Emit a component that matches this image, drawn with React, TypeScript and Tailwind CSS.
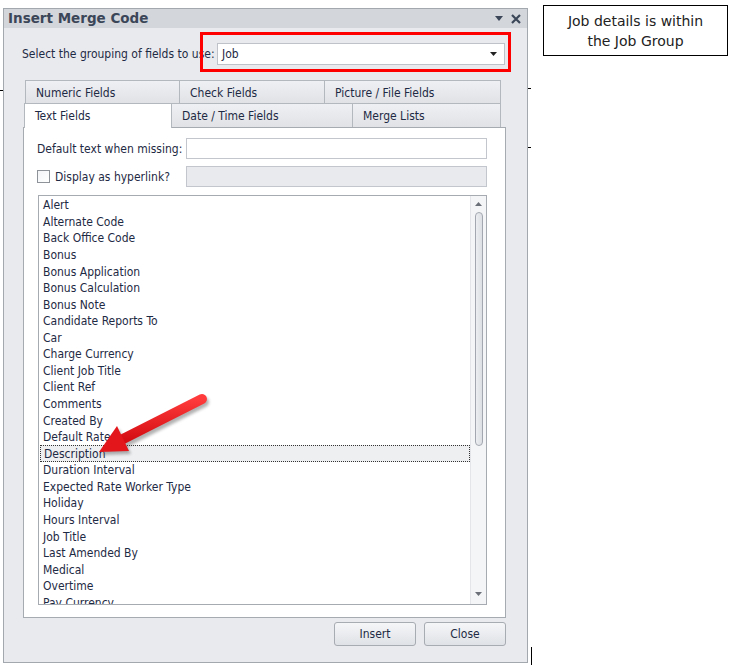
import React from 'react';

const items = [
  'Alert', 'Alternate Code', 'Back Office Code', 'Bonus', 'Bonus Application', 'Bonus Calculation',
  'Bonus Note', 'Candidate Reports To', 'Car', 'Charge Currency', 'Client Job Title', 'Client Ref',
  'Comments', 'Created By', 'Default Rate', 'Description', 'Duration Interval',
  'Expected Rate Worker Type', 'Holiday', 'Hours Interval', 'Job Title', 'Last Amended By',
  'Medical', 'Overtime', 'Pay Currency',
];

const tabCls =
  'flex items-center pl-[10px] pt-[1px] border-t border-r border-[#b3b7be] bg-gradient-to-b from-[#eef0f3] to-[#e0e2e6]';

function RedArrow() {
  return (
    <svg className="absolute left-[85px] top-[385px]" width="135" height="90" viewBox="85 385 135 90">
      <defs>
        <filter id="sh" x="-20%" y="-20%" width="140%" height="140%">
          <feGaussianBlur stdDeviation="1.5" />
        </filter>
        <linearGradient id="rg" x1="0" y1="0" x2="0" y2="1">
          <stop offset="0" stopColor="#ff3b3b" />
          <stop offset="1" stopColor="#d40d12" />
        </linearGradient>
      </defs>
      <g opacity="0.45" filter="url(#sh)" transform="translate(2 3)">
        <line x1="202" y1="399" x2="122" y2="440" stroke="#555" strokeWidth="10" strokeLinecap="round" />
        <polygon points="99,452 129,451 117,426" fill="#555" />
      </g>
      <line x1="202" y1="399" x2="121" y2="440" stroke="url(#rg)" strokeWidth="10" strokeLinecap="round" />
      <polygon points="99,452 129,451 117,426" fill="#e3161b" />
    </svg>
  );
}

export default function App() {
  return (
    <div className="relative w-[730px] h-[665px] bg-white overflow-hidden flex items-start font-['DejaVu_Sans_Condensed','Liberation_Sans',sans-serif] text-[12px] text-[#1e2a44]">
      {/* dialog */}
      <div className="ml-[3px] mt-[8px] w-[525px] h-[655px] border border-[#a3a7ae] bg-[#e9eaee] flex flex-col">
        <div className="h-[19px] bg-[#d3d6db] flex items-center pl-[4px] pr-[6px]">
          <span className="font-bold font-['DejaVu_Sans','Liberation_Sans',sans-serif] text-[13.5px] text-[#3b4658]">Insert Merge Code</span>
          <div className="ml-auto flex items-center gap-[8px] text-[#3b4658]">
            <svg width="8" height="5" viewBox="0 0 8 5"><polygon points="0,0 8,0 4,5" fill="#3b4658" /></svg>
            <svg width="10" height="10" viewBox="0 0 10 10">
              <path d="M1 1 L9 9 M9 1 L1 9" stroke="#3b4658" strokeWidth="2.2" />
            </svg>
          </div>
        </div>

        <div className="flex items-center mt-[15px] pl-[18px]">
          <span className="w-[195px] shrink-0">Select the grouping of fields to use:</span>
          <div className="w-[288px] h-[22px] bg-white border border-[#bfc3c9] flex items-center pl-[4px] pr-[7px]">
            <span>Job</span>
            <svg className="ml-auto" width="7" height="4" viewBox="0 0 7 4"><polygon points="0,0 7,0 3.5,4" fill="#222" /></svg>
          </div>
        </div>

        {/* tabs */}
        <div className="ml-[19px] mt-[15px] w-[483px] flex flex-col">
          <div className="ml-[2px] flex h-[23px]">
            <div className={`${tabCls} w-[155px] border-l`}>Numeric Fields</div>
            <div className={`${tabCls} w-[145px]`}>Check Fields</div>
            <div className={`${tabCls} w-[176px]`}>Picture / File Fields</div>
          </div>
          <div className="ml-[1px] flex h-[24px] items-end">
            <div className="relative z-10 w-[148px] h-[25px] -mb-px bg-white border-t border-l border-r border-[#b3b7be] flex items-center pl-[10px]">
              Text Fields
            </div>
            <div className={`${tabCls} w-[181px] h-[24px]`}>Date / Time Fields</div>
            <div className={`${tabCls} w-[148px] h-[24px]`}>Merge Lists</div>
          </div>

          <div className="h-[491px] bg-white border border-[#a6aab1] pl-[13px] pt-[10px] flex flex-col">
            <div className="flex items-center">
              <span className="w-[149px] shrink-0">Default text when missing:</span>
              <div className="w-[301px] h-[21px] bg-white border border-[#c3c6cc]" />
            </div>
            <div className="flex items-center mt-[7px]">
              <div className="w-[149px] shrink-0 flex items-center gap-[5px]">
                <div className="w-[13px] h-[13px] border border-[#8e939a] bg-gradient-to-br from-[#f3f4f6] to-white" />
                <span>Display as hyperlink?</span>
              </div>
              <div className="w-[301px] h-[21px] bg-[#e9eaee] border border-[#c3c6cc]" />
            </div>

            <div className="ml-[1px] mt-[8px] w-[449px] h-[410px] border border-[#a6aab1] flex overflow-hidden">
              <div className="flex-1 pl-[1px] pt-[1px] flex flex-col">
                {items.map((it) => (
                  <div
                    key={it}
                    className={`h-[16.57px] shrink-0 flex items-center pl-[3px] ${
                      it === 'Description' ? 'border border-dotted border-[#333] bg-[#eeeff1] pl-[2px]' : ''
                    }`}
                  >
                    {it}
                  </div>
                ))}
              </div>
              <div className="w-[16px] bg-[#f4f5f7] border-l border-[#e3e5e8] flex flex-col items-center">
                <svg className="mt-[6px]" width="7" height="4" viewBox="0 0 7 4"><polygon points="3.5,0 7,4 0,4" fill="#6b7078" /></svg>
                <div className="mt-[6px] w-[8px] h-[234px] rounded-full border border-[#a3a8b0] bg-gradient-to-r from-[#eceef1] to-[#dcdfe3]" />
                <svg className="mt-auto mb-[8px]" width="7" height="4" viewBox="0 0 7 4"><polygon points="0,0 7,0 3.5,4" fill="#6b7078" /></svg>
              </div>
            </div>
          </div>
        </div>

        <div className="mt-[4px] pr-[21px] flex justify-end gap-[8px]">
          <button className="w-[82px] h-[24px] rounded-[3px] border border-[#a7abb2] bg-gradient-to-b from-[#f5f6f8] to-[#dfe2e6] text-[#1e2a44] text-[12px]">
            Insert
          </button>
          <button className="w-[82px] h-[24px] rounded-[3px] border border-[#a7abb2] bg-gradient-to-b from-[#f5f6f8] to-[#dfe2e6] text-[#1e2a44] text-[12px]">
            Close
          </button>
        </div>
      </div>

      {/* annotation */}
      <div className="ml-[15px] mt-[5px] w-[185px] h-[51px] border border-black flex items-center justify-center text-center font-['DejaVu_Sans','Liberation_Sans',sans-serif] text-[14px] leading-[20px] text-[#222]">
        Job details is within
        <br />
        the Job Group
      </div>

      {/* overlays */}
      <div className="absolute left-[200px] top-[32px] w-[311px] h-[40px] border-[3px] border-[#ff0000]" />
      <RedArrow />
      <div className="absolute left-[528px] top-[88px] w-[3px] h-px bg-black" />
      <div className="absolute left-[528px] top-[147px] w-[3px] h-px bg-black" />
      <div className="absolute left-0 top-[90px] w-[3px] h-px bg-black" />
      <div className="absolute left-[531px] top-[647px] w-px h-[18px] bg-black" />
    </div>
  );
}
